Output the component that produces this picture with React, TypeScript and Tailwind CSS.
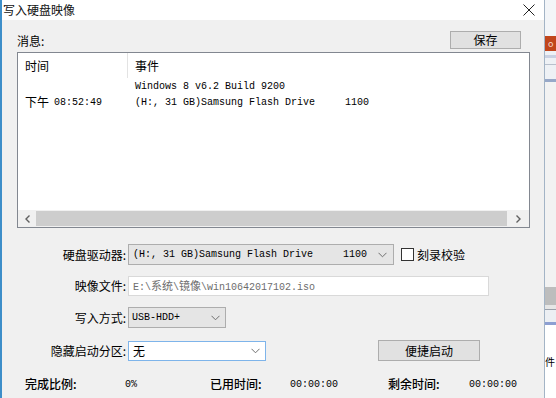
import { ReactNode } from 'react'

const sans = "font-['Noto_Sans_CJK_SC',sans-serif]"
const mono = "font-['Liberation_Mono','Noto_Sans_CJK_SC',monospace]"

const Chevron = () => (
  <svg width="9" height="6" viewBox="0 0 9 6" className="shrink-0">
    <path d="M0.5 0.8 L4.5 4.8 L8.5 0.8" fill="none" stroke="#6f6f6f" strokeWidth="1" />
  </svg>
)

const Label = ({ children }: { children: ReactNode }) => (
  <div className={`${sans} w-[109px] text-right text-[12px] leading-none mr-[2px]`}>{children}</div>
)

const App = () => {
  return (
    <div className="flex w-[556px] h-[398px] overflow-hidden bg-[#f0f0f0] text-black">
      <div className="flex flex-col w-[545px] h-full border-l-2 border-l-[#3d8ec9] border-r border-r-[#a3b4c6] bg-[#f0f0f0]">
        {/* title bar */}
        <div className="h-[20px] bg-white flex items-center justify-between pl-[1px] pr-[9px]">
          <span className={`${sans} text-[12px] leading-none text-[#111]`}>写入硬盘映像</span>
          <svg width="12" height="12" viewBox="0 0 12 12">
            <path d="M0.5 0.5 L11.5 11.5 M11.5 0.5 L0.5 11.5" stroke="#222" strokeWidth="1" />
          </svg>
        </div>

        <div className="flex flex-col pl-[15px] pr-[14px]">
          <div className="flex items-end justify-between mt-[11px] mb-[3px]">
            <span className={`${sans} text-[12px] leading-none pb-[2px]`}>消息:</span>
            <button
              className={`${sans} w-[71px] h-[18px] mr-[9px] bg-[#e1e1e1] border border-[#adadad] text-[12px] leading-none`}
            >
              保存
            </button>
          </div>

          {/* log list */}
          <div className="h-[176px] border border-[#828790] bg-white flex flex-col">
            <div className={`${sans} flex h-[25px] text-[12px]`}>
              <div className="w-[110px] pl-[7px] flex items-center border-r border-r-[#e3e3e3]">时间</div>
              <div className="pl-[7px] flex items-center">事件</div>
            </div>
            <div className={`${mono} flex h-[16px] items-center text-[10px] whitespace-pre`}>
              <div className="w-[110px]" />
              <div className="pl-[7px]">Windows 8 v6.2 Build 9200</div>
            </div>
            <div className={`${mono} flex h-[16px] items-center text-[10px] whitespace-pre`}>
              <div className="w-[110px] pl-[7px] flex items-center">
                <span className={`${sans} text-[12px] mr-[5px]`}>下午</span>08:52:49
              </div>
              <div className="pl-[7px]">(H:, 31 GB)Samsung Flash Drive     1100</div>
            </div>
            <div className="flex-1" />
            <div className="h-[17px] flex items-center bg-[#f0f0f0]">
              <div className="w-[18px] flex justify-center">
                <svg width="5" height="8" viewBox="0 0 5 8">
                  <path d="M4.5 0.5 L1 4 L4.5 7.5" fill="none" stroke="#606060" strokeWidth="1.4" />
                </svg>
              </div>
              <div className="flex-1 h-[15px] bg-[#cdcdcd]" />
              <div className="w-[22px] flex justify-center">
                <svg width="5" height="8" viewBox="0 0 5 8">
                  <path d="M0.5 0.5 L4 4 L0.5 7.5" fill="none" stroke="#606060" strokeWidth="1.4" />
                </svg>
              </div>
            </div>
          </div>

          {/* form */}
          <div className="flex items-center mt-[16px]">
            <Label>硬盘驱动器:</Label>
            <div className="w-[266px] h-[21px] bg-[#e5e5e5] border border-[#adadad] flex items-center pl-[4px] pr-[6px]">
              <span className={`${mono} text-[10px] whitespace-pre flex-1`}>(H:, 31 GB)Samsung Flash Drive     1100</span>
              <Chevron />
            </div>
            <div className="ml-[7px] w-[13px] h-[13px] border border-[#333] bg-white" />
            <span className={`${sans} ml-[3px] text-[12px] leading-none`}>刻录校验</span>
          </div>

          <div className="flex items-center mt-[11px]">
            <Label>映像文件:</Label>
            <div className="w-[361px] h-[20px] bg-white border border-[#d9d9d9] flex items-center pl-[4px]">
              <span className={`${mono} text-[10px] text-[#6d6d6d] whitespace-pre`}>
                E:\<span className={`${sans} text-[11px]`}>系统</span>\<span className={`${sans} text-[11px]`}>镜像</span>\win10642017102.iso
              </span>
            </div>
          </div>

          <div className="flex items-center mt-[11px]">
            <Label>写入方式:</Label>
            <div className="w-[98px] h-[21px] bg-[#e5e5e5] border border-[#adadad] flex items-center pl-[3px] pr-[5px]">
              <span className={`${mono} text-[10px] flex-1`}>USB-HDD+</span>
              <Chevron />
            </div>
          </div>

          <div className="flex items-center mt-[12px]">
            <Label>隐藏启动分区:</Label>
            <div className="w-[138px] h-[20px] bg-white border border-[#7eb4ea] flex items-center pl-[4px] pr-[5px]">
              <span className={`${sans} text-[12px] leading-none flex-1`}>无</span>
              <Chevron />
            </div>
            <button
              className={`${sans} ml-[112px] w-[102px] h-[21px] bg-[#e1e1e1] border border-[#adadad] text-[12px] leading-none`}
            >
              便捷启动
            </button>
          </div>

          {/* status */}
          <div className="flex items-center mt-[15px] h-[16px] text-[12px] pl-[8px]">
            <span className={`${sans} w-[100px] font-medium`}>完成比例:</span>
            <span className={`${mono} w-[85px] text-[10px]`}>0%</span>
            <span className={`${sans} w-[80px] font-medium`}>已用时间:</span>
            <span className={`${mono} w-[98px] text-[10px]`}>00:00:00</span>
            <span className={`${sans} w-[81px] font-medium`}>剩余时间:</span>
            <span className={`${mono} text-[10px]`}>00:00:00</span>
          </div>
        </div>
      </div>

      {/* window behind */}
      <div className="flex flex-col w-[11px] h-full bg-[#eef1f5] overflow-hidden">
        <div className="h-[36px] bg-[#f3f5f8]" />
        <div className="h-[15px] bg-[#c1461c] flex items-center pl-[3px]">
          <span className={`${sans} text-[9px] leading-none text-[#f3d6c8]`}>o</span>
        </div>
        <div className="h-[4px]" />
        <div className="h-[3px] bg-[#c9d1e2]" />
        <div className="h-[6px]" />
        <div className="h-[1px] bg-[#b8c0cc]" />
        <div className="h-[14px]" />
        <div className="h-[3px] bg-[#97a8c8]" />
        <div className="flex-1 bg-[#f2f2f2]" />
        <div className="h-[18px] bg-[#bdbdbd]" />
        <div className="h-[4px] bg-[#e6e6e6]" />
        <div className="h-[1px] bg-[#9aa0aa]" />
        <div className="h-[12px] bg-[#eceff3]" />
        <div className="h-[3px] bg-[#8d9fd2]" />
        <div className="h-[32px] bg-white" />
        <div className={`${sans} h-[16px] bg-white text-[10px] leading-none`}>件</div>
        <div className="h-[25px] bg-white" />
      </div>
    </div>
  )
}

export default App
